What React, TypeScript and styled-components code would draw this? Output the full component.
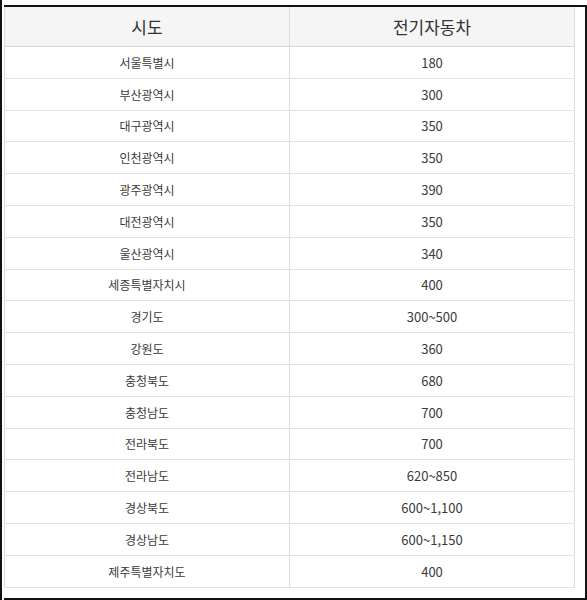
import React from 'react'
import styled, { createGlobalStyle } from 'styled-components'

const GlobalStyle = createGlobalStyle`
  html, body {
    margin: 0;
    padding: 0;
    background: #fff;
  }
  body {
    font-family: "Noto Sans CJK KR", "Noto Sans", sans-serif;
  }
`

const rows: [string, string][] = [
  ['서울특별시', '180'],
  ['부산광역시', '300'],
  ['대구광역시', '350'],
  ['인천광역시', '350'],
  ['광주광역시', '390'],
  ['대전광역시', '350'],
  ['울산광역시', '340'],
  ['세종특별자치시', '400'],
  ['경기도', '300~500'],
  ['강원도', '360'],
  ['충청북도', '680'],
  ['충청남도', '700'],
  ['전라북도', '700'],
  ['전라남도', '620~850'],
  ['경상북도', '600~1,100'],
  ['경상남도', '600~1,150'],
  ['제주특별자치도', '400'],
]

// screenshot frame around the table
const Page = styled.div`
  width: 587px;
  height: 600px;
  box-sizing: border-box;
  border-left: 2px solid #111;
  padding-top: 5px;
  padding-left: 2px;
`

const Sheet = styled.div`
  width: 583px;
  height: 595px;
  box-sizing: border-box;
  border-top: 2px solid #111;
  border-right: 2px solid #111;
  border-bottom: 2px solid #111;
`

const Table = styled.table`
  width: 571px;
  border-collapse: collapse;
  table-layout: fixed;
  border-left: 1px solid #dcdcdc;
  border-right: 1px solid #dcdcdc;
`

const HeadCell = styled.th`
  height: 39px;
  padding: 0;
  background: #f5f5f5;
  color: #333;
  font-size: 17px;
  font-weight: 400;
  text-align: center;
  border-bottom: 1px solid #d4d4d4;
  & + & {
    border-left: 1px solid #dcdcdc;
  }
`

const Cell = styled.td<{ $num?: boolean }>`
  height: 30.8px;
  padding: 0;
  color: #3a3a3a;
  font-size: ${p => (p.$num ? '13px' : '12px')};
  text-align: center;
  border-bottom: 1px solid #e2e2e2;
  & + & {
    border-left: 1px solid #dcdcdc;
  }
`

export default function App() {
  return (
    <>
      <GlobalStyle />
      <Page>
        <Sheet>
          <Table>
            <thead>
              <tr>
                <HeadCell>시도</HeadCell>
                <HeadCell>전기자동차</HeadCell>
              </tr>
            </thead>
            <tbody>
              {rows.map(([region, amount]) => (
                <tr key={region}>
                  <Cell>{region}</Cell>
                  <Cell $num>{amount}</Cell>
                </tr>
              ))}
            </tbody>
          </Table>
        </Sheet>
      </Page>
    </>
  )
}
